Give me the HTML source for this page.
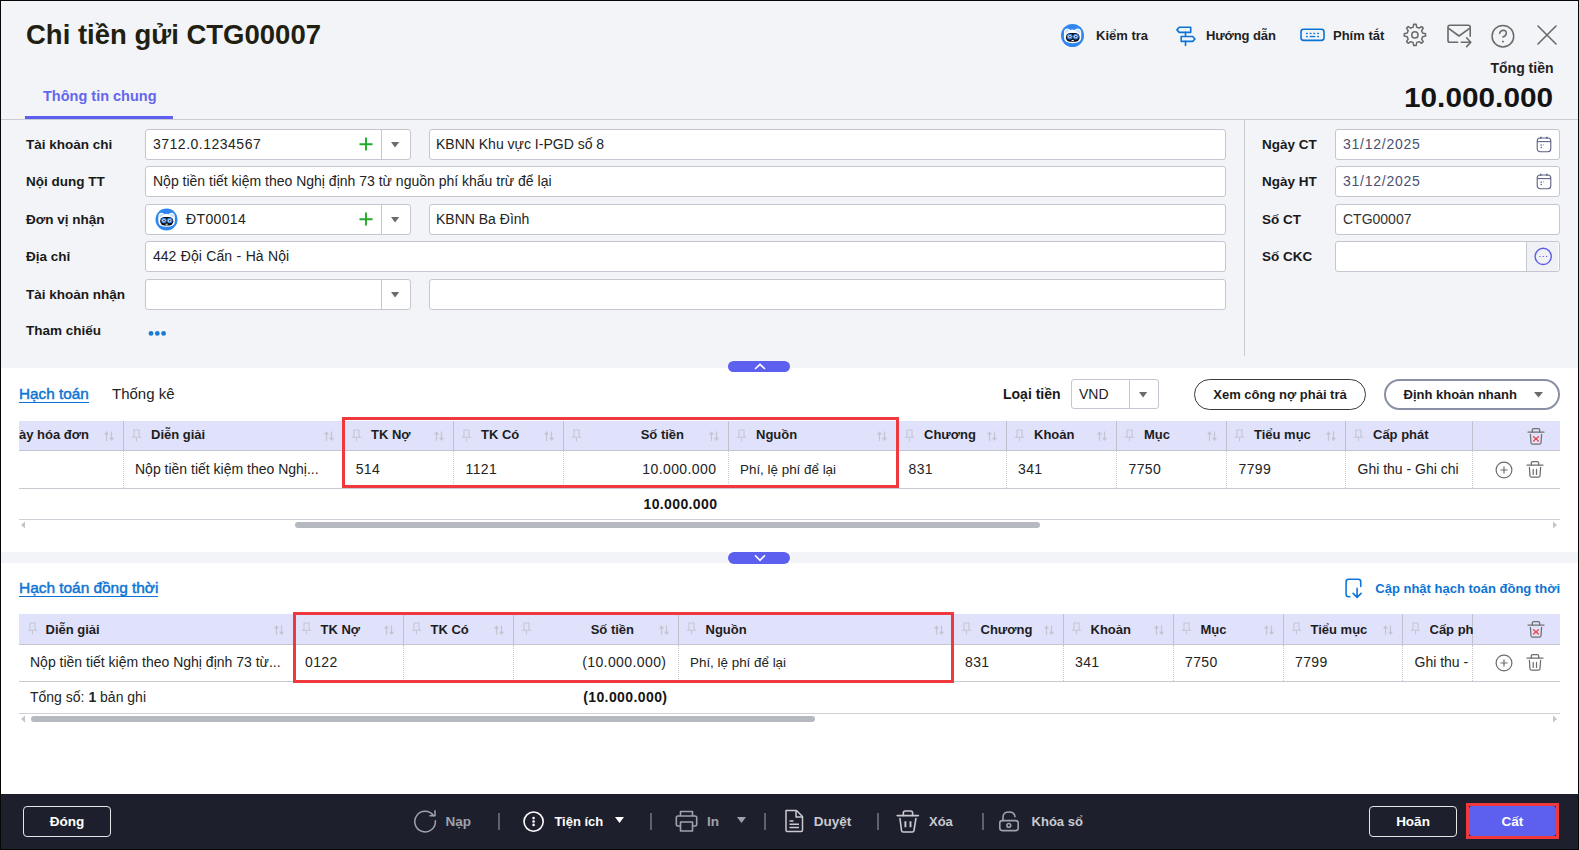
<!DOCTYPE html><html><head><meta charset="utf-8"><style>
html,body{margin:0;padding:0;}
body{width:1579px;height:850px;overflow:hidden;position:relative;background:#fff;font-family:"Liberation Sans",sans-serif;}
.t{position:absolute;white-space:nowrap;}
svg{overflow:visible}
</style></head><body>
<div style="position:absolute;left:0px;top:0px;width:1579px;height:368px;background:#f3f4f8;"></div>
<div class="t" style="left:26px;top:20.72px;font-size:27.5px;line-height:27.5px;font-weight:bold;color:#211f12;">Chi tiền gửi CTG00007</div>
<svg style="position:absolute;left:0px;top:0px;" width="1" height="1" viewBox="0 0 1 1"><g transform="translate(1061.0,24.0) scale(1.0)">
<circle cx="11.5" cy="11.5" r="11.5" fill="#2f86ee"/>
<path d="M3 9 Q2.6 4.6 6.5 4.5 Q8.6 4.6 9.3 5.9 Q11.5 5.3 13.7 5.9 Q14.4 4.6 16.5 4.5 Q20.4 4.6 20.2 9 L20.3 13 Q20.3 19.2 11.6 19.2 Q2.9 19.2 2.9 13 Z" fill="#fff"/>
<path d="M3.6 8.6 Q3.8 5.5 6.6 5.4 Q8.3 5.5 8.8 6.6 L5 9.5 Z" fill="#cfe3fb"/><path d="M19.5 8.6 Q19.3 5.5 16.5 5.4 Q14.8 5.5 14.2 6.6 L18 9.5 Z" fill="#cfe3fb"/>
<rect x="4.9" y="8.9" width="13.7" height="8.9" rx="4.4" fill="#0d0d12"/>
<circle cx="8.8" cy="12.6" r="2.9" fill="#2f86ee"/><circle cx="14.8" cy="12.6" r="2.9" fill="#2f86ee"/>
<circle cx="8.8" cy="12.6" r="1.7" fill="#e8f0ff"/><circle cx="14.8" cy="12.6" r="1.7" fill="#e8f0ff"/>
<circle cx="8.9" cy="12.6" r="0.9" fill="#2a2a44"/><circle cx="14.9" cy="12.6" r="0.9" fill="#2a2a44"/>
<rect x="10.6" y="15.9" width="2.1" height="1.1" fill="#fff"/>
</g></svg>
<div class="t" style="left:1096px;top:29.00px;font-size:13px;line-height:13px;font-weight:bold;color:#1f1f1f;">Kiểm tra</div>
<svg style="position:absolute;left:1176px;top:26px;" width="20" height="21" viewBox="0 0 20 21"><g fill="none" stroke="#0a74d6" stroke-width="1.6" stroke-linejoin="round" stroke-linecap="round">
<path d="M3.2 1.3 H14.7 V6.4 H3.2 L0.9 3.9 Z"/>
<path d="M5.2 10.5 H16.7 L19 13 L16.7 15.4 H5.2 Z"/>
<path d="M9.5 6.4 V10.5 M9.5 15.4 V19.4"/></g></svg>
<div class="t" style="left:1206px;top:29.00px;font-size:13px;line-height:13px;font-weight:bold;color:#1f1f1f;letter-spacing:-0.1px;">Hướng dẫn</div>
<svg style="position:absolute;left:1300px;top:28px;" width="26" height="14" viewBox="0 0 26 14"><g fill="none" stroke="#0a74d6" stroke-width="1.6"><rect x="1" y="1.3" width="23" height="11.1" rx="2.6"/></g>
<g fill="#0a74d6"><rect x="6" y="4.8" width="1.8" height="1.3"/><rect x="9.7" y="4.8" width="1.8" height="1.3"/><rect x="13.4" y="4.8" width="1.8" height="1.3"/><rect x="17.2" y="4.8" width="1.8" height="1.3"/>
<rect x="6" y="7.9" width="1.8" height="1.3"/><rect x="9.7" y="7.9" width="5.6" height="1.3"/><rect x="17.2" y="7.9" width="1.8" height="1.3"/></g></svg>
<div class="t" style="left:1333px;top:29.00px;font-size:13px;line-height:13px;font-weight:bold;color:#1f1f1f;">Phím tắt</div>
<svg style="position:absolute;left:1402px;top:22px;" width="26" height="26" viewBox="0 0 26 26"><g fill="none" stroke="#6a6a6a" stroke-width="1.5" stroke-linejoin="round"><path d="M11.06 5.22 L11.73 2.26 A10.7 10.7 0 0 1 14.07 2.26 L14.74 5.22 A7.9 7.9 0 0 1 17.03 6.16 L19.59 4.55 A10.7 10.7 0 0 1 21.25 6.21 L19.64 8.77 A7.9 7.9 0 0 1 20.58 11.06 L23.54 11.73 A10.7 10.7 0 0 1 23.54 14.07 L20.58 14.74 A7.9 7.9 0 0 1 19.64 17.03 L21.25 19.59 A10.7 10.7 0 0 1 19.59 21.25 L17.03 19.64 A7.9 7.9 0 0 1 14.74 20.58 L14.07 23.54 A10.7 10.7 0 0 1 11.73 23.54 L11.06 20.58 A7.9 7.9 0 0 1 8.77 19.64 L6.21 21.25 A10.7 10.7 0 0 1 4.55 19.59 L6.16 17.03 A7.9 7.9 0 0 1 5.22 14.74 L2.26 14.07 A10.7 10.7 0 0 1 2.26 11.73 L5.22 11.06 A7.9 7.9 0 0 1 6.16 8.77 L4.55 6.21 A10.7 10.7 0 0 1 6.21 4.55 L8.77 6.16 A7.9 7.9 0 0 1 11.06 5.22 Z"/><circle cx="12.9" cy="12.9" r="3.1"/></g></svg>
<svg style="position:absolute;left:1446px;top:24px;" width="27" height="24" viewBox="0 0 27 24"><g fill="none" stroke="#6a6a6a" stroke-width="1.6" stroke-linecap="round" stroke-linejoin="round">
<path d="M11.6 18.3 H3.8 Q2 18.3 2 16.5 V3.1 Q2 1.3 3.8 1.3 H22.4 Q24.2 1.3 24.2 3.1 V12.2"/>
<path d="M2.6 4.4 L13 12 L23.6 4.4"/>
<path d="M15.3 18.2 H24.6 M20.6 13.8 L24.8 18.2 L20.6 22.6"/></g></svg>
<svg style="position:absolute;left:1490px;top:23px;" width="26" height="26" viewBox="0 0 26 26"><g fill="none" stroke="#6a6a6a" stroke-width="1.5" stroke-linecap="round"><circle cx="12.9" cy="13.2" r="10.8"/>
<path d="M9.6 10.4 Q10.5 7.3 13.2 7.3 Q16.5 7.4 16.3 10.4 Q16.2 12.8 13 14"/></g><rect x="12" y="17.8" width="1.9" height="1.5" fill="#6a6a6a"/></svg>
<svg style="position:absolute;left:1535px;top:23px;" width="24" height="24" viewBox="0 0 24 24"><g stroke="#6a6a6a" stroke-width="1.6" stroke-linecap="round"><path d="M3 3 L21 21 M21 3 L3 21"/></g></svg>
<div class="t" style="right:25.5px;top:61.15px;font-size:14px;line-height:14px;font-weight:bold;color:#1f1f1f;">Tổng tiền</div>
<div class="t" style="right:25.5px;top:85.14px;font-size:27px;line-height:27px;font-weight:bold;color:#141414;transform:scaleX(1.104);transform-origin:100% 50%;">10.000.000</div>
<div class="t" style="left:43px;top:88.73px;font-size:14.5px;line-height:14.5px;font-weight:bold;color:#6466ee;">Thông tin chung</div>
<div style="position:absolute;left:25px;top:116px;width:148px;height:3px;background:#5d5fef;"></div>
<div style="position:absolute;left:0px;top:119px;width:1579px;height:1px;background:#c9cad3;"></div>
<div style="position:absolute;left:1244px;top:119px;width:1px;height:237px;background:#c9cad3;"></div>
<div class="t" style="left:26px;top:137.57px;font-size:13.5px;line-height:13.5px;font-weight:bold;color:#191919;">Tài khoản chi</div>
<div class="t" style="left:26px;top:174.57px;font-size:13.5px;line-height:13.5px;font-weight:bold;color:#191919;">Nội dung TT</div>
<div class="t" style="left:26px;top:212.57px;font-size:13.5px;line-height:13.5px;font-weight:bold;color:#191919;">Đơn vị nhận</div>
<div class="t" style="left:26px;top:249.57px;font-size:13.5px;line-height:13.5px;font-weight:bold;color:#191919;">Địa chỉ</div>
<div class="t" style="left:26px;top:287.57px;font-size:13.5px;line-height:13.5px;font-weight:bold;color:#191919;">Tài khoản nhận</div>
<div class="t" style="left:26px;top:323.97px;font-size:13.5px;line-height:13.5px;font-weight:bold;color:#191919;">Tham chiếu</div>
<div style="position:absolute;left:145px;top:129px;width:266px;height:31px;box-sizing:border-box;background:#fff;border:1px solid #c5c6cf;border-radius:3px;"></div>
<div style="position:absolute;left:381px;top:130px;width:1px;height:29px;background:#c5c6cf;"></div>
<svg style="position:absolute;left:391.4px;top:142.3px;" width="8.2" height="5.4" viewBox="0 0 8.2 5.4"><path d="M0 0 H8.2 L4.1 5.4 Z" fill="#6b6b6b"/></svg>
<svg style="position:absolute;left:358.5px;top:137.0px;" width="14" height="14" viewBox="0 0 14 14"><g stroke="#22aa2a" stroke-width="1.9"><path d="M0.5 7.2 H13.5 M7 0.5 V13.5"/></g></svg>
<div class="t" style="left:153px;top:137.15px;font-size:14px;line-height:14px;font-weight:normal;color:#232323;letter-spacing:0.5px;">3712.0.1234567</div>
<div style="position:absolute;left:429px;top:129px;width:797px;height:31px;box-sizing:border-box;background:#fff;border:1px solid #c5c6cf;border-radius:3px;"></div>
<div class="t" style="left:436px;top:137.15px;font-size:14px;line-height:14px;font-weight:normal;color:#232323;">KBNN Khu vực I-PGD số 8</div>
<div style="position:absolute;left:145px;top:166px;width:1081px;height:31px;box-sizing:border-box;background:#fff;border:1px solid #c5c6cf;border-radius:3px;"></div>
<div class="t" style="left:153px;top:174.15px;font-size:14px;line-height:14px;font-weight:normal;color:#232323;">Nộp tiền tiết kiệm theo Nghị định 73 từ nguồn phí khấu trừ để lại</div>
<div style="position:absolute;left:145px;top:204px;width:266px;height:31px;box-sizing:border-box;background:#fff;border:1px solid #c5c6cf;border-radius:3px;"></div>
<div style="position:absolute;left:381px;top:205px;width:1px;height:29px;background:#c5c6cf;"></div>
<svg style="position:absolute;left:391.4px;top:217.3px;" width="8.2" height="5.4" viewBox="0 0 8.2 5.4"><path d="M0 0 H8.2 L4.1 5.4 Z" fill="#6b6b6b"/></svg>
<svg style="position:absolute;left:358.5px;top:212.0px;" width="14" height="14" viewBox="0 0 14 14"><g stroke="#22aa2a" stroke-width="1.9"><path d="M0.5 7.2 H13.5 M7 0.5 V13.5"/></g></svg>
<svg style="position:absolute;left:0px;top:0px;" width="1" height="1" viewBox="0 0 1 1"><g transform="translate(155.5,208.5) scale(0.9565217391304348)">
<circle cx="11.5" cy="11.5" r="11.5" fill="#2f86ee"/>
<path d="M3 9 Q2.6 4.6 6.5 4.5 Q8.6 4.6 9.3 5.9 Q11.5 5.3 13.7 5.9 Q14.4 4.6 16.5 4.5 Q20.4 4.6 20.2 9 L20.3 13 Q20.3 19.2 11.6 19.2 Q2.9 19.2 2.9 13 Z" fill="#fff"/>
<path d="M3.6 8.6 Q3.8 5.5 6.6 5.4 Q8.3 5.5 8.8 6.6 L5 9.5 Z" fill="#cfe3fb"/><path d="M19.5 8.6 Q19.3 5.5 16.5 5.4 Q14.8 5.5 14.2 6.6 L18 9.5 Z" fill="#cfe3fb"/>
<rect x="4.9" y="8.9" width="13.7" height="8.9" rx="4.4" fill="#0d0d12"/>
<circle cx="8.8" cy="12.6" r="2.9" fill="#2f86ee"/><circle cx="14.8" cy="12.6" r="2.9" fill="#2f86ee"/>
<circle cx="8.8" cy="12.6" r="1.7" fill="#e8f0ff"/><circle cx="14.8" cy="12.6" r="1.7" fill="#e8f0ff"/>
<circle cx="8.9" cy="12.6" r="0.9" fill="#2a2a44"/><circle cx="14.9" cy="12.6" r="0.9" fill="#2a2a44"/>
<rect x="10.6" y="15.9" width="2.1" height="1.1" fill="#fff"/>
</g></svg>
<div class="t" style="left:186px;top:212.15px;font-size:14px;line-height:14px;font-weight:normal;color:#232323;letter-spacing:0.37px;">ĐT00014</div>
<div style="position:absolute;left:429px;top:204px;width:797px;height:31px;box-sizing:border-box;background:#fff;border:1px solid #c5c6cf;border-radius:3px;"></div>
<div class="t" style="left:436px;top:212.15px;font-size:14px;line-height:14px;font-weight:normal;color:#232323;">KBNN Ba Đình</div>
<div style="position:absolute;left:145px;top:241px;width:1081px;height:31px;box-sizing:border-box;background:#fff;border:1px solid #c5c6cf;border-radius:3px;"></div>
<div class="t" style="left:153px;top:249.15px;font-size:14px;line-height:14px;font-weight:normal;color:#232323;word-spacing:0.6px;">442 Đội Cấn - Hà Nội</div>
<div style="position:absolute;left:145px;top:279px;width:266px;height:31px;box-sizing:border-box;background:#fff;border:1px solid #c5c6cf;border-radius:3px;"></div>
<div style="position:absolute;left:381px;top:280px;width:1px;height:29px;background:#c5c6cf;"></div>
<svg style="position:absolute;left:391.4px;top:292.3px;" width="8.2" height="5.4" viewBox="0 0 8.2 5.4"><path d="M0 0 H8.2 L4.1 5.4 Z" fill="#6b6b6b"/></svg>
<div style="position:absolute;left:429px;top:279px;width:797px;height:31px;box-sizing:border-box;background:#fff;border:1px solid #c5c6cf;border-radius:3px;"></div>
<svg style="position:absolute;left:148px;top:330px;" width="22" height="7" viewBox="0 0 22 7"><g fill="#1a7bd6"><circle cx="3" cy="3.4" r="2.4"/><circle cx="9.3" cy="3.4" r="2.4"/><circle cx="15.6" cy="3.4" r="2.4"/></g></svg>
<div class="t" style="left:1262px;top:137.57px;font-size:13.5px;line-height:13.5px;font-weight:bold;color:#191919;">Ngày CT</div>
<div class="t" style="left:1262px;top:174.57px;font-size:13.5px;line-height:13.5px;font-weight:bold;color:#191919;">Ngày HT</div>
<div class="t" style="left:1262px;top:212.57px;font-size:13.5px;line-height:13.5px;font-weight:bold;color:#191919;">Số CT</div>
<div class="t" style="left:1262px;top:249.57px;font-size:13.5px;line-height:13.5px;font-weight:bold;color:#191919;">Số CKC</div>
<div style="position:absolute;left:1335px;top:129px;width:225px;height:31px;box-sizing:border-box;background:#fff;border:1px solid #c5c6cf;border-radius:3px;"></div>
<div class="t" style="left:1343px;top:137.15px;font-size:14px;line-height:14px;font-weight:normal;color:#4b5070;letter-spacing:0.75px;">31/12/2025</div>
<svg style="position:absolute;left:1535.6px;top:135.5px;" width="16" height="17" viewBox="0 0 16 17"><g fill="none" stroke="#5c6283" stroke-width="1.1"><rect x="1.2" y="2" width="13.6" height="13.8" rx="3"/><path d="M1.2 5.6 H14.8"/><path d="M4.8 0.8 V2.8 M10.9 0.8 V2.8" stroke-width="1.5"/></g>
<g fill="#5c6283"><rect x="4.6" y="8.3" width="1.1" height="1.8"/><rect x="4.6" y="10.9" width="1.3" height="1.3"/><rect x="7" y="8.3" width="1" height="1" opacity=".6"/></g></svg>
<div style="position:absolute;left:1335px;top:166px;width:225px;height:31px;box-sizing:border-box;background:#fff;border:1px solid #c5c6cf;border-radius:3px;"></div>
<div class="t" style="left:1343px;top:174.15px;font-size:14px;line-height:14px;font-weight:normal;color:#4b5070;letter-spacing:0.75px;">31/12/2025</div>
<svg style="position:absolute;left:1535.6px;top:173px;" width="16" height="17" viewBox="0 0 16 17"><g fill="none" stroke="#5c6283" stroke-width="1.1"><rect x="1.2" y="2" width="13.6" height="13.8" rx="3"/><path d="M1.2 5.6 H14.8"/><path d="M4.8 0.8 V2.8 M10.9 0.8 V2.8" stroke-width="1.5"/></g>
<g fill="#5c6283"><rect x="4.6" y="8.3" width="1.1" height="1.8"/><rect x="4.6" y="10.9" width="1.3" height="1.3"/><rect x="7" y="8.3" width="1" height="1" opacity=".6"/></g></svg>
<div style="position:absolute;left:1335px;top:204px;width:225px;height:31px;box-sizing:border-box;background:#fff;border:1px solid #c5c6cf;border-radius:3px;"></div>
<div class="t" style="left:1343px;top:212.15px;font-size:14px;line-height:14px;font-weight:normal;color:#333;">CTG00007</div>
<div style="position:absolute;left:1335px;top:241px;width:225px;height:31px;box-sizing:border-box;background:#fff;border:1px solid #c5c6cf;border-radius:3px;"></div>
<div style="position:absolute;left:1526px;top:242px;width:32px;height:29px;box-sizing:border-box;background:#f0f1f5;border-left:1px solid #c5c6cf;border-radius:0 2px 2px 0;"></div>
<svg style="position:absolute;left:1534px;top:247px;" width="18" height="18" viewBox="0 0 18 18"><circle cx="9.2" cy="9.4" r="8.1" fill="none" stroke="#5b5be8" stroke-width="1.4"/><g fill="#5b5be8"><rect x="5.3" y="9" width="1.2" height="1"/><rect x="8.6" y="9" width="1.2" height="1"/><rect x="11.9" y="9" width="1.2" height="1"/></g></svg>
<div style="position:absolute;left:728px;top:360.5px;width:62px;height:11.5px;background:#5d5fef;border-radius:6px;"></div>
<svg style="position:absolute;left:754px;top:362.5px;" width="12" height="7" viewBox="0 0 12 7"><path d="M1 6 L6 1.3 L11 6" fill="none" stroke="#fff" stroke-width="1.6"/></svg>
<div class="t" style="left:19px;top:386.05px;font-size:15.3px;line-height:15.3px;font-weight:normal;color:#0d74d4;-webkit-text-stroke:0.45px #0d74d4;">Hạch toán</div>
<div style="position:absolute;left:19px;top:402px;width:70px;height:1.2px;background:#0d74d4;"></div>
<div class="t" style="left:112px;top:386.30px;font-size:15px;line-height:15px;font-weight:normal;color:#222;">Thống kê</div>
<div class="t" style="left:1003px;top:387.45px;font-size:14px;line-height:14px;font-weight:bold;color:#191919;">Loại tiền</div>
<div style="position:absolute;left:1071px;top:379px;width:88px;height:30px;box-sizing:border-box;background:#fff;border:1px solid #c5c6cf;border-radius:3px;"></div>
<div style="position:absolute;left:1129px;top:380px;width:1px;height:28px;background:#c5c6cf;"></div>
<div class="t" style="left:1079px;top:387.15px;font-size:14px;line-height:14px;font-weight:normal;color:#232323;">VND</div>
<svg style="position:absolute;left:1139.3000000000002px;top:392.3px;" width="8.2" height="5.4" viewBox="0 0 8.2 5.4"><path d="M0 0 H8.2 L4.1 5.4 Z" fill="#6b6b6b"/></svg>
<div style="position:absolute;left:1194px;top:379px;width:172px;height:31px;box-sizing:border-box;border:1px solid #3a3a3a;border-radius:16px;"></div>
<div class="t" style="left:1280px;transform:translateX(-50%);top:388.00px;font-size:13px;line-height:13px;font-weight:bold;color:#1c1c1c;">Xem công nợ phải trả</div>
<div style="position:absolute;left:1384px;top:379px;width:176px;height:31px;box-sizing:border-box;border:2px solid #8a8fa5;border-radius:16px;"></div>
<div class="t" style="left:1403.5px;top:388.00px;font-size:13px;line-height:13px;font-weight:bold;color:#1c1c1c;">Định khoản nhanh</div>
<svg style="position:absolute;left:1533.5px;top:391.75px;" width="9" height="5.5" viewBox="0 0 9 5.5"><path d="M0 0 H9 L4.5 5.5 Z" fill="#6b6b6b"/></svg>
<div style="position:absolute;left:19px;top:421px;width:1541px;height:29px;background:#e0e1fb;"></div>
<div style="position:absolute;left:19px;top:450px;width:1541px;height:1px;background:#c4c5cf;"></div>
<div style="position:absolute;left:19px;top:488px;width:1541px;height:1px;background:#c9cad2;"></div>
<div style="position:absolute;left:19px;top:519px;width:1541px;height:1px;background:#d0d1d8;"></div>
<div style="position:absolute;left:123px;top:421px;width:1px;height:29px;background:#c0c1cc;"></div>
<div style="position:absolute;left:123px;top:451px;width:0px;height:37px;border-left:1px dotted #c9cad2;"></div>
<div style="position:absolute;left:343px;top:421px;width:1px;height:29px;background:#c0c1cc;"></div>
<div style="position:absolute;left:343px;top:451px;width:0px;height:37px;border-left:1px dotted #c9cad2;"></div>
<div style="position:absolute;left:453px;top:421px;width:1px;height:29px;background:#c0c1cc;"></div>
<div style="position:absolute;left:453px;top:451px;width:0px;height:37px;border-left:1px dotted #c9cad2;"></div>
<div style="position:absolute;left:563px;top:421px;width:1px;height:29px;background:#c0c1cc;"></div>
<div style="position:absolute;left:563px;top:451px;width:0px;height:37px;border-left:1px dotted #c9cad2;"></div>
<div style="position:absolute;left:728px;top:421px;width:1px;height:29px;background:#c0c1cc;"></div>
<div style="position:absolute;left:728px;top:451px;width:0px;height:37px;border-left:1px dotted #c9cad2;"></div>
<div style="position:absolute;left:896px;top:421px;width:1px;height:29px;background:#c0c1cc;"></div>
<div style="position:absolute;left:896px;top:451px;width:0px;height:37px;border-left:1px dotted #c9cad2;"></div>
<div style="position:absolute;left:1006px;top:421px;width:1px;height:29px;background:#c0c1cc;"></div>
<div style="position:absolute;left:1006px;top:451px;width:0px;height:37px;border-left:1px dotted #c9cad2;"></div>
<div style="position:absolute;left:1116px;top:421px;width:1px;height:29px;background:#c0c1cc;"></div>
<div style="position:absolute;left:1116px;top:451px;width:0px;height:37px;border-left:1px dotted #c9cad2;"></div>
<div style="position:absolute;left:1226px;top:421px;width:1px;height:29px;background:#c0c1cc;"></div>
<div style="position:absolute;left:1226px;top:451px;width:0px;height:37px;border-left:1px dotted #c9cad2;"></div>
<div style="position:absolute;left:1345px;top:421px;width:1px;height:29px;background:#c0c1cc;"></div>
<div style="position:absolute;left:1345px;top:451px;width:0px;height:37px;border-left:1px dotted #c9cad2;"></div>
<div style="position:absolute;left:1472px;top:421px;width:1px;height:29px;background:#c0c1cc;"></div>
<div style="position:absolute;left:1472px;top:451px;width:0px;height:37px;border-left:1px dotted #c9cad2;"></div>
<svg style="position:absolute;left:103.1px;top:430.0px;" width="12" height="12" viewBox="0 0 12 12"><g fill="none" stroke="#c3c4cf" stroke-width="1.2"><path d="M3.5 10.8 V3"/><path d="M8.5 1.5 V9"/></g><g fill="#c3c4cf"><path d="M0.9 4.6 L3.5 1.3 L6.1 4.6 Z"/><path d="M5.9 7.7 L8.5 11 L11.1 7.7 Z"/></g></svg>
<div class="t" style="left:19px;top:428.40px;font-size:13px;line-height:13px;font-weight:bold;color:#1d1d1d;">ày hóa đơn</div>
<svg style="position:absolute;left:132.2px;top:428.8px;" width="9" height="13" viewBox="0 0 9 13"><g fill="none" stroke="#c6c7d2" stroke-width="1.1"><path d="M2 1 H7 V7.5 L8.2 8.3 H0.8 L2 7.5 Z"/><path d="M4.5 8.3 V12.5"/></g></svg>
<svg style="position:absolute;left:323.1px;top:430.0px;" width="12" height="12" viewBox="0 0 12 12"><g fill="none" stroke="#c3c4cf" stroke-width="1.2"><path d="M3.5 10.8 V3"/><path d="M8.5 1.5 V9"/></g><g fill="#c3c4cf"><path d="M0.9 4.6 L3.5 1.3 L6.1 4.6 Z"/><path d="M5.9 7.7 L8.5 11 L11.1 7.7 Z"/></g></svg>
<div class="t" style="left:151px;top:428.40px;font-size:13px;line-height:13px;font-weight:bold;color:#1d1d1d;">Diễn giải</div>
<svg style="position:absolute;left:352.2px;top:428.8px;" width="9" height="13" viewBox="0 0 9 13"><g fill="none" stroke="#c6c7d2" stroke-width="1.1"><path d="M2 1 H7 V7.5 L8.2 8.3 H0.8 L2 7.5 Z"/><path d="M4.5 8.3 V12.5"/></g></svg>
<svg style="position:absolute;left:433.1px;top:430.0px;" width="12" height="12" viewBox="0 0 12 12"><g fill="none" stroke="#c3c4cf" stroke-width="1.2"><path d="M3.5 10.8 V3"/><path d="M8.5 1.5 V9"/></g><g fill="#c3c4cf"><path d="M0.9 4.6 L3.5 1.3 L6.1 4.6 Z"/><path d="M5.9 7.7 L8.5 11 L11.1 7.7 Z"/></g></svg>
<div class="t" style="left:371px;top:428.40px;font-size:13px;line-height:13px;font-weight:bold;color:#1d1d1d;">TK Nợ</div>
<svg style="position:absolute;left:462.2px;top:428.8px;" width="9" height="13" viewBox="0 0 9 13"><g fill="none" stroke="#c6c7d2" stroke-width="1.1"><path d="M2 1 H7 V7.5 L8.2 8.3 H0.8 L2 7.5 Z"/><path d="M4.5 8.3 V12.5"/></g></svg>
<svg style="position:absolute;left:543.1px;top:430.0px;" width="12" height="12" viewBox="0 0 12 12"><g fill="none" stroke="#c3c4cf" stroke-width="1.2"><path d="M3.5 10.8 V3"/><path d="M8.5 1.5 V9"/></g><g fill="#c3c4cf"><path d="M0.9 4.6 L3.5 1.3 L6.1 4.6 Z"/><path d="M5.9 7.7 L8.5 11 L11.1 7.7 Z"/></g></svg>
<div class="t" style="left:481px;top:428.40px;font-size:13px;line-height:13px;font-weight:bold;color:#1d1d1d;">TK Có</div>
<svg style="position:absolute;left:572.2px;top:428.8px;" width="9" height="13" viewBox="0 0 9 13"><g fill="none" stroke="#c6c7d2" stroke-width="1.1"><path d="M2 1 H7 V7.5 L8.2 8.3 H0.8 L2 7.5 Z"/><path d="M4.5 8.3 V12.5"/></g></svg>
<svg style="position:absolute;left:708.1px;top:430.0px;" width="12" height="12" viewBox="0 0 12 12"><g fill="none" stroke="#c3c4cf" stroke-width="1.2"><path d="M3.5 10.8 V3"/><path d="M8.5 1.5 V9"/></g><g fill="#c3c4cf"><path d="M0.9 4.6 L3.5 1.3 L6.1 4.6 Z"/><path d="M5.9 7.7 L8.5 11 L11.1 7.7 Z"/></g></svg>
<div class="t" style="right:895px;top:428.40px;font-size:13px;line-height:13px;font-weight:bold;color:#1d1d1d;">Số tiền</div>
<svg style="position:absolute;left:737.2px;top:428.8px;" width="9" height="13" viewBox="0 0 9 13"><g fill="none" stroke="#c6c7d2" stroke-width="1.1"><path d="M2 1 H7 V7.5 L8.2 8.3 H0.8 L2 7.5 Z"/><path d="M4.5 8.3 V12.5"/></g></svg>
<svg style="position:absolute;left:876.1px;top:430.0px;" width="12" height="12" viewBox="0 0 12 12"><g fill="none" stroke="#c3c4cf" stroke-width="1.2"><path d="M3.5 10.8 V3"/><path d="M8.5 1.5 V9"/></g><g fill="#c3c4cf"><path d="M0.9 4.6 L3.5 1.3 L6.1 4.6 Z"/><path d="M5.9 7.7 L8.5 11 L11.1 7.7 Z"/></g></svg>
<div class="t" style="left:756px;top:428.40px;font-size:13px;line-height:13px;font-weight:bold;color:#1d1d1d;">Nguồn</div>
<svg style="position:absolute;left:905.2px;top:428.8px;" width="9" height="13" viewBox="0 0 9 13"><g fill="none" stroke="#c6c7d2" stroke-width="1.1"><path d="M2 1 H7 V7.5 L8.2 8.3 H0.8 L2 7.5 Z"/><path d="M4.5 8.3 V12.5"/></g></svg>
<svg style="position:absolute;left:986.1px;top:430.0px;" width="12" height="12" viewBox="0 0 12 12"><g fill="none" stroke="#c3c4cf" stroke-width="1.2"><path d="M3.5 10.8 V3"/><path d="M8.5 1.5 V9"/></g><g fill="#c3c4cf"><path d="M0.9 4.6 L3.5 1.3 L6.1 4.6 Z"/><path d="M5.9 7.7 L8.5 11 L11.1 7.7 Z"/></g></svg>
<div class="t" style="left:924px;top:428.40px;font-size:13px;line-height:13px;font-weight:bold;color:#1d1d1d;">Chương</div>
<svg style="position:absolute;left:1015.2px;top:428.8px;" width="9" height="13" viewBox="0 0 9 13"><g fill="none" stroke="#c6c7d2" stroke-width="1.1"><path d="M2 1 H7 V7.5 L8.2 8.3 H0.8 L2 7.5 Z"/><path d="M4.5 8.3 V12.5"/></g></svg>
<svg style="position:absolute;left:1096.1px;top:430.0px;" width="12" height="12" viewBox="0 0 12 12"><g fill="none" stroke="#c3c4cf" stroke-width="1.2"><path d="M3.5 10.8 V3"/><path d="M8.5 1.5 V9"/></g><g fill="#c3c4cf"><path d="M0.9 4.6 L3.5 1.3 L6.1 4.6 Z"/><path d="M5.9 7.7 L8.5 11 L11.1 7.7 Z"/></g></svg>
<div class="t" style="left:1034px;top:428.40px;font-size:13px;line-height:13px;font-weight:bold;color:#1d1d1d;">Khoản</div>
<svg style="position:absolute;left:1125.2px;top:428.8px;" width="9" height="13" viewBox="0 0 9 13"><g fill="none" stroke="#c6c7d2" stroke-width="1.1"><path d="M2 1 H7 V7.5 L8.2 8.3 H0.8 L2 7.5 Z"/><path d="M4.5 8.3 V12.5"/></g></svg>
<svg style="position:absolute;left:1206.1px;top:430.0px;" width="12" height="12" viewBox="0 0 12 12"><g fill="none" stroke="#c3c4cf" stroke-width="1.2"><path d="M3.5 10.8 V3"/><path d="M8.5 1.5 V9"/></g><g fill="#c3c4cf"><path d="M0.9 4.6 L3.5 1.3 L6.1 4.6 Z"/><path d="M5.9 7.7 L8.5 11 L11.1 7.7 Z"/></g></svg>
<div class="t" style="left:1144px;top:428.40px;font-size:13px;line-height:13px;font-weight:bold;color:#1d1d1d;">Mục</div>
<svg style="position:absolute;left:1235.2px;top:428.8px;" width="9" height="13" viewBox="0 0 9 13"><g fill="none" stroke="#c6c7d2" stroke-width="1.1"><path d="M2 1 H7 V7.5 L8.2 8.3 H0.8 L2 7.5 Z"/><path d="M4.5 8.3 V12.5"/></g></svg>
<svg style="position:absolute;left:1325.1px;top:430.0px;" width="12" height="12" viewBox="0 0 12 12"><g fill="none" stroke="#c3c4cf" stroke-width="1.2"><path d="M3.5 10.8 V3"/><path d="M8.5 1.5 V9"/></g><g fill="#c3c4cf"><path d="M0.9 4.6 L3.5 1.3 L6.1 4.6 Z"/><path d="M5.9 7.7 L8.5 11 L11.1 7.7 Z"/></g></svg>
<div class="t" style="left:1254px;top:428.40px;font-size:13px;line-height:13px;font-weight:bold;color:#1d1d1d;">Tiểu mục</div>
<svg style="position:absolute;left:1354.2px;top:428.8px;" width="9" height="13" viewBox="0 0 9 13"><g fill="none" stroke="#c6c7d2" stroke-width="1.1"><path d="M2 1 H7 V7.5 L8.2 8.3 H0.8 L2 7.5 Z"/><path d="M4.5 8.3 V12.5"/></g></svg>
<div class="t" style="left:1373px;top:428.40px;font-size:13px;line-height:13px;font-weight:bold;color:#1d1d1d;">Cấp phát</div>
<svg style="position:absolute;left:1527px;top:426.6px;" width="18" height="19" viewBox="0 0 18 19"><g fill="none" stroke="#707070" stroke-width="1.25" stroke-linecap="round" stroke-linejoin="round"><path d="M1 5 H17"/><path d="M5.3 5 V3 Q5.3 1.6 6.8 1.6 H11.2 Q12.7 1.6 12.7 3 V5"/><path d="M3.4 7.3 L4 16 Q4.2 17.2 5.4 17.2 H12.6 Q13.8 17.2 14 16 L14.6 7.3"/></g><g stroke="#f04444" stroke-width="1.3" stroke-linecap="round"><path d="M6.6 9.7 L11.4 14 M11.4 9.7 L6.6 14"/></g></svg>
<div class="t" style="left:135px;top:462.15px;font-size:14px;line-height:14px;font-weight:normal;color:#232323;">Nộp tiền tiết kiệm theo Nghị...</div>
<div class="t" style="left:355.7px;top:462.15px;font-size:14px;line-height:14px;font-weight:normal;color:#232323;letter-spacing:0.4px;">514</div>
<div class="t" style="left:465.5px;top:462.15px;font-size:14px;line-height:14px;font-weight:normal;color:#232323;letter-spacing:0.4px;">1121</div>
<div class="t" style="right:863px;top:462.15px;font-size:14px;line-height:14px;font-weight:normal;color:#232323;letter-spacing:0.4px;margin-right:-0.4px;">10.000.000</div>
<div class="t" style="left:740px;top:462.15px;font-size:14px;line-height:14px;font-weight:normal;color:#232323;"><span style="font-size:13.4px">Phí, lệ phí để lại</span></div>
<div class="t" style="left:908.5px;top:462.15px;font-size:14px;line-height:14px;font-weight:normal;color:#232323;letter-spacing:0.4px;">831</div>
<div class="t" style="left:1018px;top:462.15px;font-size:14px;line-height:14px;font-weight:normal;color:#232323;letter-spacing:0.4px;">341</div>
<div class="t" style="left:1128.5px;top:462.15px;font-size:14px;line-height:14px;font-weight:normal;color:#232323;letter-spacing:0.4px;">7750</div>
<div class="t" style="left:1238.5px;top:462.15px;font-size:14px;line-height:14px;font-weight:normal;color:#232323;letter-spacing:0.4px;">7799</div>
<div class="t" style="left:1357.5px;top:462.15px;font-size:14px;line-height:14px;font-weight:normal;color:#232323;">Ghi thu - Ghi chi</div>
<svg style="position:absolute;left:1495.4px;top:460.5px;" width="18" height="18" viewBox="0 0 18 18"><g fill="none" stroke="#6d6d6d" stroke-width="1.2"><circle cx="9" cy="9" r="7.9"/><path d="M5.4 9 H12.6 M9 5.4 V12.6"/></g></svg>
<svg style="position:absolute;left:1526px;top:459.8px;" width="18" height="19" viewBox="0 0 18 19"><g fill="none" stroke="#6d6d6d" stroke-width="1.25" stroke-linecap="round" stroke-linejoin="round"><path d="M1 5 H17"/><path d="M5.3 5 V3 Q5.3 1.6 6.8 1.6 H11.2 Q12.7 1.6 12.7 3 V5"/><path d="M3.4 7.3 L4 16 Q4.2 17.2 5.4 17.2 H12.6 Q13.8 17.2 14 16 L14.6 7.3"/><path d="M7.2 9.4 V14.4 M10.5 9.4 V14.4"/></g></svg>
<div class="t" style="right:862px;top:496.85px;font-size:14px;line-height:14px;font-weight:bold;color:#141414;letter-spacing:0.38px;margin-right:-0.38px;">10.000.000</div>
<div style="position:absolute;left:295px;top:522px;width:745px;height:6px;background:#b6b9c0;border-radius:3px;"></div>
<svg style="position:absolute;left:20px;top:521px;" width="6" height="8" viewBox="0 0 6 8"><path d="M5 0.5 V7.5 L1 4 Z" fill="#c3c5cc"/></svg>
<svg style="position:absolute;left:1552px;top:521px;" width="6" height="8" viewBox="0 0 6 8"><path d="M1 0.5 V7.5 L5 4 Z" fill="#c3c5cc"/></svg>
<div style="position:absolute;left:342px;top:417px;width:557px;height:71px;box-sizing:border-box;border:3px solid #f0393f;"></div>
<div style="position:absolute;left:728px;top:552px;width:62px;height:11.5px;background:#5d5fef;border-radius:6px;"></div>
<svg style="position:absolute;left:754px;top:554px;" width="12" height="8" viewBox="0 0 12 8"><path d="M1 1.2 L6 6.3 L11 1.2" fill="none" stroke="#fff" stroke-width="1.6"/></svg>
<div style="position:absolute;left:0px;top:552px;width:728px;height:11px;background:#f3f4f8;"></div>
<div style="position:absolute;left:790px;top:552px;width:789px;height:11px;background:#f3f4f8;"></div>
<div class="t" style="left:19px;top:579.58px;font-size:15.5px;line-height:15.5px;font-weight:normal;color:#0d74d4;-webkit-text-stroke:0.45px #0d74d4;letter-spacing:-0.05px;">Hạch toán đồng thời</div>
<div style="position:absolute;left:19px;top:595.5px;width:139px;height:1.2px;background:#0d74d4;"></div>
<svg style="position:absolute;left:1344px;top:577px;" width="20" height="22" viewBox="0 0 20 22"><g fill="none" stroke="#0f76d8" stroke-width="1.6" stroke-linecap="round" stroke-linejoin="round"><path d="M5.9 19.7 H4.6 Q2.1 19.7 2.1 17.2 V4.8 Q2.1 2.3 4.6 2.3 H14.25 Q16.75 2.3 16.75 4.8 V9.5"/><path d="M13.1 11.3 V20.2 M9.1 16.4 L13.1 20.4 L17.1 16.4"/></g></svg>
<div class="t" style="right:19px;top:582.00px;font-size:13px;line-height:13px;font-weight:bold;color:#0d74d4;">Cập nhật hạch toán đồng thời</div>
<div style="position:absolute;left:19px;top:614px;width:1541px;height:30px;background:#e0e1fb;"></div>
<div style="position:absolute;left:19px;top:644px;width:1541px;height:1px;background:#c4c5cf;"></div>
<div style="position:absolute;left:19px;top:681px;width:1541px;height:1px;background:#c9cad2;"></div>
<div style="position:absolute;left:19px;top:713px;width:1541px;height:1px;background:#d0d1d8;"></div>
<div style="position:absolute;left:293px;top:614px;width:1px;height:30px;background:#c0c1cc;"></div>
<div style="position:absolute;left:293px;top:645px;width:0px;height:36px;border-left:1px dotted #c9cad2;"></div>
<div style="position:absolute;left:403px;top:614px;width:1px;height:30px;background:#c0c1cc;"></div>
<div style="position:absolute;left:403px;top:645px;width:0px;height:36px;border-left:1px dotted #c9cad2;"></div>
<div style="position:absolute;left:513px;top:614px;width:1px;height:30px;background:#c0c1cc;"></div>
<div style="position:absolute;left:513px;top:645px;width:0px;height:36px;border-left:1px dotted #c9cad2;"></div>
<div style="position:absolute;left:678px;top:614px;width:1px;height:30px;background:#c0c1cc;"></div>
<div style="position:absolute;left:678px;top:645px;width:0px;height:36px;border-left:1px dotted #c9cad2;"></div>
<div style="position:absolute;left:953px;top:614px;width:1px;height:30px;background:#c0c1cc;"></div>
<div style="position:absolute;left:953px;top:645px;width:0px;height:36px;border-left:1px dotted #c9cad2;"></div>
<div style="position:absolute;left:1063px;top:614px;width:1px;height:30px;background:#c0c1cc;"></div>
<div style="position:absolute;left:1063px;top:645px;width:0px;height:36px;border-left:1px dotted #c9cad2;"></div>
<div style="position:absolute;left:1173px;top:614px;width:1px;height:30px;background:#c0c1cc;"></div>
<div style="position:absolute;left:1173px;top:645px;width:0px;height:36px;border-left:1px dotted #c9cad2;"></div>
<div style="position:absolute;left:1283px;top:614px;width:1px;height:30px;background:#c0c1cc;"></div>
<div style="position:absolute;left:1283px;top:645px;width:0px;height:36px;border-left:1px dotted #c9cad2;"></div>
<div style="position:absolute;left:1402px;top:614px;width:1px;height:30px;background:#c0c1cc;"></div>
<div style="position:absolute;left:1402px;top:645px;width:0px;height:36px;border-left:1px dotted #c9cad2;"></div>
<div style="position:absolute;left:1472px;top:614px;width:1px;height:30px;background:#c0c1cc;"></div>
<div style="position:absolute;left:1472px;top:645px;width:0px;height:36px;border-left:1px dotted #c9cad2;"></div>
<svg style="position:absolute;left:28.2px;top:622.3px;" width="9" height="13" viewBox="0 0 9 13"><g fill="none" stroke="#c6c7d2" stroke-width="1.1"><path d="M2 1 H7 V7.5 L8.2 8.3 H0.8 L2 7.5 Z"/><path d="M4.5 8.3 V12.5"/></g></svg>
<svg style="position:absolute;left:273.1px;top:623.5px;" width="12" height="12" viewBox="0 0 12 12"><g fill="none" stroke="#c3c4cf" stroke-width="1.2"><path d="M3.5 10.8 V3"/><path d="M8.5 1.5 V9"/></g><g fill="#c3c4cf"><path d="M0.9 4.6 L3.5 1.3 L6.1 4.6 Z"/><path d="M5.9 7.7 L8.5 11 L11.1 7.7 Z"/></g></svg>
<div class="t" style="left:45.5px;top:623.00px;font-size:13px;line-height:13px;font-weight:bold;color:#1d1d1d;">Diễn giải</div>
<svg style="position:absolute;left:302.2px;top:622.3px;" width="9" height="13" viewBox="0 0 9 13"><g fill="none" stroke="#c6c7d2" stroke-width="1.1"><path d="M2 1 H7 V7.5 L8.2 8.3 H0.8 L2 7.5 Z"/><path d="M4.5 8.3 V12.5"/></g></svg>
<svg style="position:absolute;left:383.1px;top:623.5px;" width="12" height="12" viewBox="0 0 12 12"><g fill="none" stroke="#c3c4cf" stroke-width="1.2"><path d="M3.5 10.8 V3"/><path d="M8.5 1.5 V9"/></g><g fill="#c3c4cf"><path d="M0.9 4.6 L3.5 1.3 L6.1 4.6 Z"/><path d="M5.9 7.7 L8.5 11 L11.1 7.7 Z"/></g></svg>
<div class="t" style="left:320.5px;top:623.00px;font-size:13px;line-height:13px;font-weight:bold;color:#1d1d1d;">TK Nợ</div>
<svg style="position:absolute;left:412.2px;top:622.3px;" width="9" height="13" viewBox="0 0 9 13"><g fill="none" stroke="#c6c7d2" stroke-width="1.1"><path d="M2 1 H7 V7.5 L8.2 8.3 H0.8 L2 7.5 Z"/><path d="M4.5 8.3 V12.5"/></g></svg>
<svg style="position:absolute;left:493.1px;top:623.5px;" width="12" height="12" viewBox="0 0 12 12"><g fill="none" stroke="#c3c4cf" stroke-width="1.2"><path d="M3.5 10.8 V3"/><path d="M8.5 1.5 V9"/></g><g fill="#c3c4cf"><path d="M0.9 4.6 L3.5 1.3 L6.1 4.6 Z"/><path d="M5.9 7.7 L8.5 11 L11.1 7.7 Z"/></g></svg>
<div class="t" style="left:430.5px;top:623.00px;font-size:13px;line-height:13px;font-weight:bold;color:#1d1d1d;">TK Có</div>
<svg style="position:absolute;left:522.2px;top:622.3px;" width="9" height="13" viewBox="0 0 9 13"><g fill="none" stroke="#c6c7d2" stroke-width="1.1"><path d="M2 1 H7 V7.5 L8.2 8.3 H0.8 L2 7.5 Z"/><path d="M4.5 8.3 V12.5"/></g></svg>
<svg style="position:absolute;left:658.1px;top:623.5px;" width="12" height="12" viewBox="0 0 12 12"><g fill="none" stroke="#c3c4cf" stroke-width="1.2"><path d="M3.5 10.8 V3"/><path d="M8.5 1.5 V9"/></g><g fill="#c3c4cf"><path d="M0.9 4.6 L3.5 1.3 L6.1 4.6 Z"/><path d="M5.9 7.7 L8.5 11 L11.1 7.7 Z"/></g></svg>
<div class="t" style="right:945px;top:623.00px;font-size:13px;line-height:13px;font-weight:bold;color:#1d1d1d;">Số tiền</div>
<svg style="position:absolute;left:687.2px;top:622.3px;" width="9" height="13" viewBox="0 0 9 13"><g fill="none" stroke="#c6c7d2" stroke-width="1.1"><path d="M2 1 H7 V7.5 L8.2 8.3 H0.8 L2 7.5 Z"/><path d="M4.5 8.3 V12.5"/></g></svg>
<svg style="position:absolute;left:933.1px;top:623.5px;" width="12" height="12" viewBox="0 0 12 12"><g fill="none" stroke="#c3c4cf" stroke-width="1.2"><path d="M3.5 10.8 V3"/><path d="M8.5 1.5 V9"/></g><g fill="#c3c4cf"><path d="M0.9 4.6 L3.5 1.3 L6.1 4.6 Z"/><path d="M5.9 7.7 L8.5 11 L11.1 7.7 Z"/></g></svg>
<div class="t" style="left:705.5px;top:623.00px;font-size:13px;line-height:13px;font-weight:bold;color:#1d1d1d;">Nguồn</div>
<svg style="position:absolute;left:962.2px;top:622.3px;" width="9" height="13" viewBox="0 0 9 13"><g fill="none" stroke="#c6c7d2" stroke-width="1.1"><path d="M2 1 H7 V7.5 L8.2 8.3 H0.8 L2 7.5 Z"/><path d="M4.5 8.3 V12.5"/></g></svg>
<svg style="position:absolute;left:1043.1px;top:623.5px;" width="12" height="12" viewBox="0 0 12 12"><g fill="none" stroke="#c3c4cf" stroke-width="1.2"><path d="M3.5 10.8 V3"/><path d="M8.5 1.5 V9"/></g><g fill="#c3c4cf"><path d="M0.9 4.6 L3.5 1.3 L6.1 4.6 Z"/><path d="M5.9 7.7 L8.5 11 L11.1 7.7 Z"/></g></svg>
<div class="t" style="left:980.5px;top:623.00px;font-size:13px;line-height:13px;font-weight:bold;color:#1d1d1d;">Chương</div>
<svg style="position:absolute;left:1072.2px;top:622.3px;" width="9" height="13" viewBox="0 0 9 13"><g fill="none" stroke="#c6c7d2" stroke-width="1.1"><path d="M2 1 H7 V7.5 L8.2 8.3 H0.8 L2 7.5 Z"/><path d="M4.5 8.3 V12.5"/></g></svg>
<svg style="position:absolute;left:1153.1px;top:623.5px;" width="12" height="12" viewBox="0 0 12 12"><g fill="none" stroke="#c3c4cf" stroke-width="1.2"><path d="M3.5 10.8 V3"/><path d="M8.5 1.5 V9"/></g><g fill="#c3c4cf"><path d="M0.9 4.6 L3.5 1.3 L6.1 4.6 Z"/><path d="M5.9 7.7 L8.5 11 L11.1 7.7 Z"/></g></svg>
<div class="t" style="left:1090.5px;top:623.00px;font-size:13px;line-height:13px;font-weight:bold;color:#1d1d1d;">Khoản</div>
<svg style="position:absolute;left:1182.2px;top:622.3px;" width="9" height="13" viewBox="0 0 9 13"><g fill="none" stroke="#c6c7d2" stroke-width="1.1"><path d="M2 1 H7 V7.5 L8.2 8.3 H0.8 L2 7.5 Z"/><path d="M4.5 8.3 V12.5"/></g></svg>
<svg style="position:absolute;left:1263.1px;top:623.5px;" width="12" height="12" viewBox="0 0 12 12"><g fill="none" stroke="#c3c4cf" stroke-width="1.2"><path d="M3.5 10.8 V3"/><path d="M8.5 1.5 V9"/></g><g fill="#c3c4cf"><path d="M0.9 4.6 L3.5 1.3 L6.1 4.6 Z"/><path d="M5.9 7.7 L8.5 11 L11.1 7.7 Z"/></g></svg>
<div class="t" style="left:1200.5px;top:623.00px;font-size:13px;line-height:13px;font-weight:bold;color:#1d1d1d;">Mục</div>
<svg style="position:absolute;left:1292.2px;top:622.3px;" width="9" height="13" viewBox="0 0 9 13"><g fill="none" stroke="#c6c7d2" stroke-width="1.1"><path d="M2 1 H7 V7.5 L8.2 8.3 H0.8 L2 7.5 Z"/><path d="M4.5 8.3 V12.5"/></g></svg>
<svg style="position:absolute;left:1382.1px;top:623.5px;" width="12" height="12" viewBox="0 0 12 12"><g fill="none" stroke="#c3c4cf" stroke-width="1.2"><path d="M3.5 10.8 V3"/><path d="M8.5 1.5 V9"/></g><g fill="#c3c4cf"><path d="M0.9 4.6 L3.5 1.3 L6.1 4.6 Z"/><path d="M5.9 7.7 L8.5 11 L11.1 7.7 Z"/></g></svg>
<div class="t" style="left:1310.5px;top:623.00px;font-size:13px;line-height:13px;font-weight:bold;color:#1d1d1d;">Tiểu mục</div>
<svg style="position:absolute;left:1411.2px;top:622.3px;" width="9" height="13" viewBox="0 0 9 13"><g fill="none" stroke="#c6c7d2" stroke-width="1.1"><path d="M2 1 H7 V7.5 L8.2 8.3 H0.8 L2 7.5 Z"/><path d="M4.5 8.3 V12.5"/></g></svg>
<div class="t" style="left:1429.5px;top:623.00px;font-size:13px;line-height:13px;font-weight:bold;color:#1d1d1d;"><span style="display:inline-block;width:43px;overflow:hidden;vertical-align:top">Cấp phát</span></div>
<svg style="position:absolute;left:1527px;top:620.1px;" width="18" height="19" viewBox="0 0 18 19"><g fill="none" stroke="#707070" stroke-width="1.25" stroke-linecap="round" stroke-linejoin="round"><path d="M1 5 H17"/><path d="M5.3 5 V3 Q5.3 1.6 6.8 1.6 H11.2 Q12.7 1.6 12.7 3 V5"/><path d="M3.4 7.3 L4 16 Q4.2 17.2 5.4 17.2 H12.6 Q13.8 17.2 14 16 L14.6 7.3"/></g><g stroke="#f04444" stroke-width="1.3" stroke-linecap="round"><path d="M6.6 9.7 L11.4 14 M11.4 9.7 L6.6 14"/></g></svg>
<div class="t" style="left:30px;top:654.95px;font-size:14px;line-height:14px;font-weight:normal;color:#232323;">Nộp tiền tiết kiệm theo Nghị định 73 từ...</div>
<div class="t" style="left:305px;top:654.95px;font-size:14px;line-height:14px;font-weight:normal;color:#232323;letter-spacing:0.4px;">0122</div>
<div class="t" style="right:913px;top:654.95px;font-size:14px;line-height:14px;font-weight:normal;color:#232323;letter-spacing:0.4px;margin-right:-0.4px;">(10.000.000)</div>
<div class="t" style="left:690px;top:654.95px;font-size:14px;line-height:14px;font-weight:normal;color:#232323;"><span style="font-size:13.4px">Phí, lệ phí để lại</span></div>
<div class="t" style="left:965px;top:654.95px;font-size:14px;line-height:14px;font-weight:normal;color:#232323;letter-spacing:0.4px;">831</div>
<div class="t" style="left:1075px;top:654.95px;font-size:14px;line-height:14px;font-weight:normal;color:#232323;letter-spacing:0.4px;">341</div>
<div class="t" style="left:1185px;top:654.95px;font-size:14px;line-height:14px;font-weight:normal;color:#232323;letter-spacing:0.4px;">7750</div>
<div class="t" style="left:1295px;top:654.95px;font-size:14px;line-height:14px;font-weight:normal;color:#232323;letter-spacing:0.4px;">7799</div>
<div class="t" style="left:1414.5px;top:654.95px;font-size:14px;line-height:14px;font-weight:normal;color:#232323;">Ghi thu -</div>
<svg style="position:absolute;left:1495.4px;top:654.0px;" width="18" height="18" viewBox="0 0 18 18"><g fill="none" stroke="#6d6d6d" stroke-width="1.2"><circle cx="9" cy="9" r="7.9"/><path d="M5.4 9 H12.6 M9 5.4 V12.6"/></g></svg>
<svg style="position:absolute;left:1526px;top:653.3px;" width="18" height="19" viewBox="0 0 18 19"><g fill="none" stroke="#6d6d6d" stroke-width="1.25" stroke-linecap="round" stroke-linejoin="round"><path d="M1 5 H17"/><path d="M5.3 5 V3 Q5.3 1.6 6.8 1.6 H11.2 Q12.7 1.6 12.7 3 V5"/><path d="M3.4 7.3 L4 16 Q4.2 17.2 5.4 17.2 H12.6 Q13.8 17.2 14 16 L14.6 7.3"/><path d="M7.2 9.4 V14.4 M10.5 9.4 V14.4"/></g></svg>
<div class="t" style="left:30px;top:690.15px;font-size:14px;line-height:14px;font-weight:normal;color:#232323;">Tổng số: <b>1</b> bản ghi</div>
<div class="t" style="right:912px;top:689.65px;font-size:14px;line-height:14px;font-weight:bold;color:#141414;letter-spacing:0.4px;margin-right:-0.4px;">(10.000.000)</div>
<div style="position:absolute;left:31px;top:716px;width:784px;height:6px;background:#b6b9c0;border-radius:3px;"></div>
<svg style="position:absolute;left:20px;top:715px;" width="6" height="8" viewBox="0 0 6 8"><path d="M5 0.5 V7.5 L1 4 Z" fill="#c3c5cc"/></svg>
<svg style="position:absolute;left:1552px;top:715px;" width="6" height="8" viewBox="0 0 6 8"><path d="M1 0.5 V7.5 L5 4 Z" fill="#c3c5cc"/></svg>
<div style="position:absolute;left:293px;top:612px;width:661px;height:71px;box-sizing:border-box;border:3px solid #f0393f;"></div>
<div style="position:absolute;left:0px;top:794px;width:1579px;height:56px;background:#1e1f2d;"></div>
<div style="position:absolute;left:23px;top:806px;width:88px;height:31px;box-sizing:border-box;border:1px solid #e6e6ea;border-radius:4px;"></div>
<div class="t" style="left:67px;transform:translateX(-50%);top:815.07px;font-size:13.5px;line-height:13.5px;font-weight:bold;color:#fff;">Đóng</div>
<svg style="position:absolute;left:413px;top:810px;" width="24" height="24" viewBox="0 0 24 24"><g fill="none" stroke="#a0a2aa" stroke-width="1.5" stroke-linecap="round" stroke-linejoin="round"><path d="M22.36 10.70 A10.3 10.3 0 1 1 20.43 5.55"/><path d="M17 5.7 H22 V0.8"/></g></svg>
<div class="t" style="left:445.5px;top:814.57px;font-size:13.5px;line-height:13.5px;font-weight:bold;color:#a0a2aa;">Nạp</div>
<div style="position:absolute;left:498px;top:813px;width:1.6px;height:17px;background:#5f616d;"></div>
<svg style="position:absolute;left:523px;top:810px;" width="22" height="22" viewBox="0 0 22 22"><circle cx="10.6" cy="11.6" r="9.6" fill="none" stroke="#fff" stroke-width="1.6"/><g fill="#fff"><circle cx="10.6" cy="8.1" r="1.3"/><circle cx="10.6" cy="11.5" r="1.3"/><circle cx="10.6" cy="14.9" r="1.3"/></g></svg>
<div class="t" style="left:554.4px;top:815.00px;font-size:13px;line-height:13px;font-weight:bold;color:#fff;">Tiện ích</div>
<svg style="position:absolute;left:614.8px;top:817.0px;" width="9" height="6" viewBox="0 0 9 6"><path d="M0 0 H9 L4.5 6 Z" fill="#fff"/></svg>
<div style="position:absolute;left:650px;top:813px;width:1.6px;height:17px;background:#5f616d;"></div>
<svg style="position:absolute;left:675px;top:809px;" width="24" height="24" viewBox="0 0 24 24"><g fill="none" stroke="#a0a2aa" stroke-width="1.6" stroke-linejoin="round"><path d="M5.5 7 V2.5 H17.5 V7"/><path d="M5.5 17 H3 Q1.3 17 1.3 15.3 V8.8 Q1.3 7 3 7 H20 Q21.7 7 21.7 8.8 V15.3 Q21.7 17 20 17 H17.5"/><rect x="5.5" y="13" width="12" height="9"/></g></svg>
<div class="t" style="left:707px;top:814.57px;font-size:13.5px;line-height:13.5px;font-weight:bold;color:#a0a2aa;">In</div>
<svg style="position:absolute;left:736.8px;top:817.0px;" width="9" height="6" viewBox="0 0 9 6"><path d="M0 0 H9 L4.5 6 Z" fill="#a0a2aa"/></svg>
<div style="position:absolute;left:764px;top:813px;width:1.6px;height:17px;background:#5f616d;"></div>
<svg style="position:absolute;left:784px;top:809px;" width="21" height="24" viewBox="0 0 21 24"><g fill="none" stroke="#c9cacf" stroke-width="1.5" stroke-linejoin="round"><path d="M2 1.5 H12.5 L18.5 7.5 V21.3 Q18.5 22.5 17.3 22.5 H3.2 Q2 22.5 2 21.3 Z"/><path d="M12 1.5 V8 H18.5"/><path d="M5.5 12 H9.5 M5.5 15.3 H15 M5.5 18.5 H15"/></g></svg>
<div class="t" style="left:813.8px;top:814.57px;font-size:13.5px;line-height:13.5px;font-weight:bold;color:#c9cacf;">Duyệt</div>
<div style="position:absolute;left:877px;top:813px;width:1.6px;height:17px;background:#5f616d;"></div>
<svg style="position:absolute;left:896px;top:809px;" width="24" height="25" viewBox="0 0 24 25"><g fill="none" stroke="#c9cacf" stroke-width="1.6" stroke-linecap="round" stroke-linejoin="round"><path d="M1.2 6.6 H22.4"/><path d="M7.3 6.4 V4 Q7.3 2 9.3 2 H14.6 Q16.6 2 16.6 4 V6.4"/><path d="M4 9.6 L5.5 21.5 Q5.7 23 7.2 23 H16.3 Q17.8 23 18 21.5 L19.9 9.6"/><path d="M9.4 12.3 V18.3 M14.5 12.3 V18.3" stroke-width="1.9" stroke-linecap="butt"/></g></svg>
<div class="t" style="left:929px;top:815.00px;font-size:13px;line-height:13px;font-weight:bold;color:#c9cacf;">Xóa</div>
<div style="position:absolute;left:982px;top:813px;width:1.6px;height:17px;background:#5f616d;"></div>
<svg style="position:absolute;left:998px;top:810px;" width="22" height="23" viewBox="0 0 22 23"><g fill="none" stroke="#a0a2aa" stroke-width="1.6" stroke-linejoin="round" stroke-linecap="round"><path d="M5 10.6 V7.2 Q5 2 11 2 Q16.5 2 17 6.6"/><rect x="1.8" y="10.6" width="18.4" height="10" rx="2.5"/><circle cx="10.8" cy="15.4" r="1.9"/></g></svg>
<div class="t" style="left:1031.6px;top:815.00px;font-size:13px;line-height:13px;font-weight:bold;color:#c9cacf;">Khóa sổ</div>
<div style="position:absolute;left:1369px;top:806px;width:88px;height:31px;box-sizing:border-box;border:1px solid #e6e6ea;border-radius:4px;"></div>
<div class="t" style="left:1413px;transform:translateX(-50%);top:815.07px;font-size:13.5px;line-height:13.5px;font-weight:bold;color:#fff;">Hoãn</div>
<div style="position:absolute;left:1466px;top:803px;width:93px;height:36px;box-sizing:border-box;border:3px solid #f0393f;"></div>
<div style="position:absolute;left:1469px;top:806px;width:87px;height:30px;background:#5d5fef;border-radius:3px;"></div>
<div class="t" style="left:1512.5px;transform:translateX(-50%);top:815.07px;font-size:13.5px;line-height:13.5px;font-weight:bold;color:#fff;">Cất</div>
<div style="position:absolute;left:0px;top:0px;width:1579px;height:850px;box-sizing:border-box;border:1px solid #060606;pointer-events:none;"></div>
</body></html>
